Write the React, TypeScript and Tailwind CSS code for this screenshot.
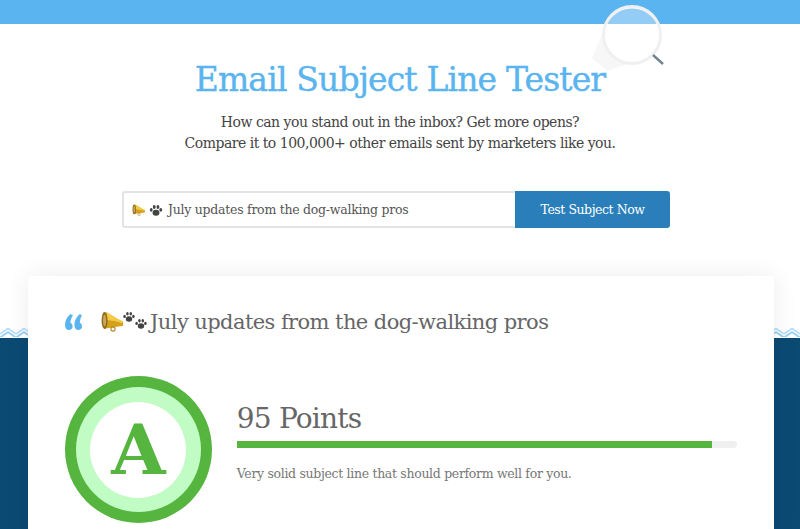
const serif = "font-['DejaVu_Serif','Liberation_Serif',serif]"

function Megaphone({ className }: { className: string }) {
  return (
    <svg viewBox="0 0 22 21" className={className}>
      <path d="M5 1 C9 3 16 8 22 10.5 L22 15 C16 15.5 9 16.5 3 18 Z" fill="#d5a01e" />
      <path d="M5 1 C9 3 16 8 22 10.5 L21 12 C15 10 9 9 4 9 Z" fill="#f4cb45" />
      <ellipse cx="3.6" cy="9.5" rx="3" ry="8.5" fill="#8f6a1a" />
      <ellipse cx="3.6" cy="9.5" rx="1.6" ry="6" fill="#c9a558" />
      <circle cx="12" cy="18" r="2.1" fill="none" stroke="#b5861c" strokeWidth="1.1" />
    </svg>
  )
}

function Paw({ className }: { className: string }) {
  return (
    <svg viewBox="0 0 12 12" className={className} fill="#444444">
      <ellipse cx="6" cy="8" rx="3.2" ry="2.8" />
      <ellipse cx="1.6" cy="5.4" rx="1.3" ry="1.7" />
      <ellipse cx="4.4" cy="2.8" rx="1.3" ry="1.8" />
      <ellipse cx="7.8" cy="2.8" rx="1.3" ry="1.8" />
      <ellipse cx="10.4" cy="5.4" rx="1.3" ry="1.7" />
    </svg>
  )
}

function Magnifier() {
  return (
    <svg viewBox="0 0 90 80" className="absolute left-[585px] top-0 h-[80px] w-[90px]">
      <polygon points="7,58 20,28 60,58 22,71" fill="#f7f7f7" />
      <circle cx="47" cy="35" r="29" fill="#ffffff" />
      <path d="M22 24 A 28 28 0 0 1 72 24 Z" fill="#93cdf5" />
      <circle cx="47" cy="35" r="28.5" fill="none" stroke="#f0f0f0" strokeWidth="3" />
      <line x1="68" y1="55" x2="78" y2="64" stroke="#6f858f" strokeWidth="2.4" />
    </svg>
  )
}

function Quote() {
  return (
    <svg viewBox="0 0 17 16" className="h-[16px] w-[17px]" fill="#5ab4ef">
      <path d="M5.5 0 C2 3 0 6.5 0 11 C0 14 1.6 16 3.9 16 C6 16 7.6 14.4 7.6 12.4 C7.6 10.6 6.6 9.4 5.4 8.8 C5.6 6 6.4 3.4 8 1.4 Z" />
      <path d="M14.9 0 C11.4 3 9.4 6.5 9.4 11 C9.4 14 11 16 13.3 16 C15.4 16 17 14.4 17 12.4 C17 10.6 16 9.4 14.8 8.8 C15 6 15.6 3.4 17 1.4 Z" />
    </svg>
  )
}

function Zigzag() {
  return (
    <svg className="block h-[10px] w-full" aria-hidden="true">
      <defs>
        <pattern id="zig" width="16" height="10" patternUnits="userSpaceOnUse">
          <path d="M0 6 L8 0.5 L16 6" fill="none" stroke="#b5dcf7" strokeWidth="1.6" />
          <path d="M0 9.5 L8 4 L16 9.5" fill="none" stroke="#93cdf5" strokeWidth="1.8" />
        </pattern>
      </defs>
      <rect width="100%" height="9" fill="url(#zig)" />
    </svg>
  )
}

export default function App() {
  return (
    <div className={`relative h-[529px] w-[800px] overflow-hidden bg-white ${serif}`}>
      {/* Header */}
      <div className="h-6 bg-[#5ab4ef]" />
      <Magnifier />
      <div className="flex h-[304px] flex-col items-center">
        <h1 className="mt-[32px] text-[33px] leading-[48px] tracking-[-0.85px] text-[#5ab4ef] [-webkit-text-stroke:0.4px_#5ab4ef]">
          Email Subject Line Tester
        </h1>
        <p className="mt-[8px] text-center text-[14px] leading-[21px] tracking-[-0.5px] text-[#444444]">
          How can you stand out in the inbox? Get more opens?
          <br />
          Compare it to 100,000+ other emails sent by marketers like you.
        </p>

        {/* Search Bar */}
        <div className="mr-[8px] mt-[37px] flex h-[37px] w-[548px]">
          <div className="flex flex-1 items-center rounded-l-[3px] border-2 border-r-0 border-[#e3e3e3] pl-[8px] pt-[1px] text-[12.5px] tracking-[-0.26px] text-[#555555]">
            <Megaphone className="h-[12px] w-[13px]" />
            <Paw className="ml-[4px] mr-[5px] h-[13px] w-[14px]" />
            July updates from the dog-walking pros
          </div>
          <div className="flex w-[155px] items-center justify-center rounded-r-[3px] bg-[#2a7fba] pt-[1px] text-[12.5px] tracking-[-0.45px] text-white">
            Test Subject Now
          </div>
        </div>
      </div>
      <Zigzag />

      <div className="flex h-[191px] flex-col bg-[#0b4a73] px-[28px]">
        {/* Result card */}
        <div className="relative -mt-[62px] h-[260px] w-[746px] shrink-0 rounded-t-[3px] bg-white px-[37px] pt-[26px] shadow-[0_0_24px_rgba(0,0,0,0.08)]">
          <div className="flex h-[40px] items-center">
            <div className="-mt-[1px] w-[36px]">
              <Quote />
            </div>
            <Megaphone className="-mt-[1px] h-[21px] w-[22px]" />
            <span className="flex">
              <Paw className="-mt-[3px] h-[12px] w-[12px]" />
              <Paw className="mt-[4px] mr-[3px] h-[12px] w-[12px]" />
            </span>
            <span className="mt-[2px] text-[21px] tracking-[-0.58px] text-[#666666]">July updates from the dog-walking pros</span>
          </div>

          <div className="mt-[34px] flex">
            <div className="flex h-[147px] w-[147px] items-center justify-center rounded-full bg-[#55b53f]">
              <div className="flex h-[125px] w-[125px] items-center justify-center rounded-full bg-[#c0fcc4]">
                <div className="flex h-[96px] w-[96px] items-center justify-center rounded-full bg-white text-[70px] font-bold text-[#55b53f]">
                  A
                </div>
              </div>
            </div>
            <div className="ml-[25px] w-[501px] pt-[23px]">
              <div className="text-[28px] leading-[40px] tracking-[-0.8px] text-[#666666]">95 Points</div>
              <div className="mt-[2px] h-[7px] rounded-full bg-[#f0f0f0]">
                <div className="h-[7px] w-[475px] bg-[#55b53f]" />
              </div>
              <p className="mt-[16px] text-[12.5px] leading-[20px] tracking-[-0.32px] text-[#777777]">
                Very solid subject line that should perform well for you.
              </p>
            </div>
          </div>
        </div>
      </div>
    </div>
  )
}
